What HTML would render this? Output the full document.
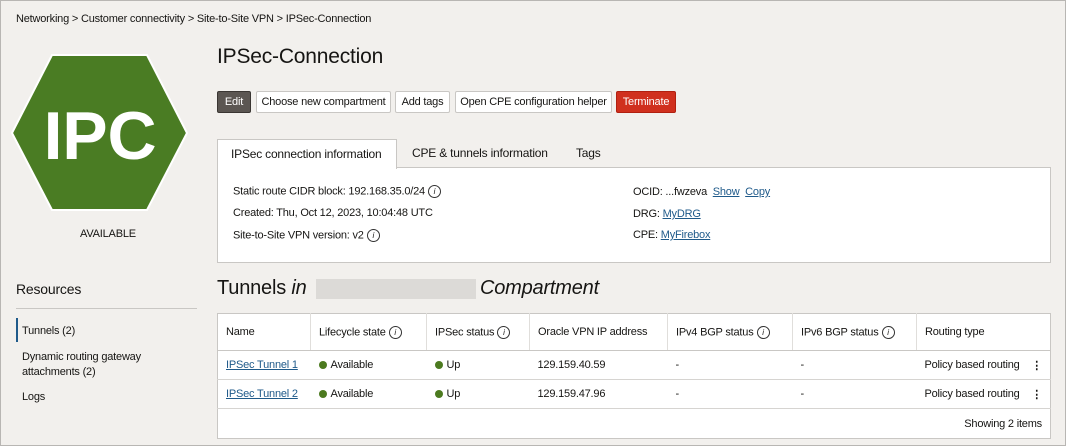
<!DOCTYPE html><html><head><style>
body{margin:0;width:1066px;height:446px;overflow:hidden;background:#f2f0ed;font-family:"Liberation Sans",sans-serif;font-size:11px;color:#161513;letter-spacing:-0.2px}
.frame{position:absolute;left:0;top:0;width:1064px;height:444px;border:1px solid #b8b6b3}
.a{position:absolute;white-space:nowrap}
.btn{position:absolute;top:91px;height:20px;line-height:20px;border:1px solid #c9c7c4;background:#fff;text-align:center;border-radius:2px;font-size:11px}
a{color:#1f5a8a;text-decoration:underline}
.i{display:inline-block;width:11px;height:11px;border:1px solid #333;border-radius:50%;font-size:8px;line-height:11px;text-align:center;font-style:italic;vertical-align:middle;margin-left:3px}
.dot{display:inline-block;width:8px;height:8px;border-radius:50%;background:#4c7a1f;margin-right:4px;vertical-align:-1px}
table{position:absolute;left:217px;top:313px;width:834px;border-collapse:collapse;background:#fff;border:1px solid #c9c7c4}
td{border-bottom:1px solid #d6d4d1;padding:0 8px;height:28px}
th{font-weight:normal;text-align:left;padding:0 8px;height:36px;border-right:1px solid #e0dedb;border-bottom:1px solid #c9c7c4}
</style></head><body><div class="frame"></div>
<div class="a" style="left:16px;top:13px">Networking &gt; Customer connectivity &gt; Site-to-Site VPN &gt; IPSec-Connection</div>
<svg class="a" style="left:10px;top:53px" width="180" height="160"><polygon points="2,80 42,2 137,2 177,80 137,157 42,157" fill="#4a7c23" stroke="#fff" stroke-width="2"/><text x="90" y="106" text-anchor="middle" font-family="Liberation Sans" font-weight="bold" font-size="68" fill="#fff">IPC</text></svg>
<div class="a" style="left:80px;top:228px">AVAILABLE</div>
<div class="a" style="left:217px;top:45px;font-size:21px">IPSec-Connection</div>
<div class="btn" style="left:217px;width:32px;background:#5b5652;color:#fff;border-color:#3a3633">Edit</div>
<div class="btn" style="left:256px;width:133px">Choose new compartment</div>
<div class="btn" style="left:395px;width:53px">Add tags</div>
<div class="btn" style="left:455px;width:155px">Open CPE configuration helper</div>
<div class="btn" style="left:616px;width:58px;background:#d0301e;color:#fff;border-color:#b02010">Terminate</div>
<div class="a" style="left:217px;top:139px;width:178px;height:29px;background:#fff;border:1px solid #c9c7c4;border-bottom:none;z-index:2"></div>
<div class="a" style="left:231px;top:147px;font-size:12px;z-index:3">IPSec connection information</div>
<div class="a" style="left:412px;top:146px;font-size:12px">CPE &amp; tunnels information</div>
<div class="a" style="left:576px;top:146px;font-size:12px">Tags</div>
<div class="a" style="left:217px;top:167px;width:832px;height:94px;background:#fff;border:1px solid #c9c7c4"></div>
<div class="a" style="left:233px;top:185px">Static route CIDR block: 192.168.35.0/24<span class="i">i</span></div>
<div class="a" style="left:233px;top:207px">Created: Thu, Oct 12, 2023, 10:04:48 UTC</div>
<div class="a" style="left:233px;top:229px">Site-to-Site VPN version: v2<span class="i">i</span></div>
<div class="a" style="left:633px;top:186px">OCID: ...fwzeva &nbsp;<a>Show</a> &nbsp;<a>Copy</a></div>
<div class="a" style="left:633px;top:208px">DRG: <a>MyDRG</a></div>
<div class="a" style="left:633px;top:229px">CPE: <a>MyFirebox</a></div>
<div class="a" style="left:16px;top:281px;font-size:14px">Resources</div>
<div class="a" style="left:16px;top:308px;width:181px;border-top:1px solid #c9c7c4"></div>
<div class="a" style="left:16px;top:318px;width:2px;height:24px;background:#1f5a8a"></div>
<div class="a" style="left:22px;top:325px">Tunnels (2)</div>
<div class="a" style="left:22px;top:350px;line-height:15px">Dynamic routing gateway<br>attachments (2)</div>
<div class="a" style="left:22px;top:391px">Logs</div>
<div class="a" style="left:217px;top:277px;font-size:20px">Tunnels <i>in</i></div>
<div class="a" style="left:316px;top:279px;width:160px;height:20px;background:#dcdad7"></div>
<div class="a" style="left:480px;top:277px;font-size:20px"><i>Compartment</i></div>
<table>
<tr><th style="width:76px">Name</th><th style="width:99px">Lifecycle state<span class="i">i</span></th><th style="width:86px">IPSec status<span class="i">i</span></th><th style="width:121px">Oracle VPN IP address</th><th style="width:108px">IPv4 BGP status<span class="i">i</span></th><th style="width:107px">IPv6 BGP status<span class="i">i</span></th><th style="border-right:none">Routing type</th></tr>
<tr><td><a>IPSec Tunnel 1</a></td><td><span class="dot"></span>Available</td><td><span class="dot"></span>Up</td><td>129.159.40.59</td><td>-</td><td>-</td><td>Policy based routing<span style="float:right;font-weight:bold">⋮</span></td></tr>
<tr><td><a>IPSec Tunnel 2</a></td><td><span class="dot"></span>Available</td><td><span class="dot"></span>Up</td><td>129.159.47.96</td><td>-</td><td>-</td><td>Policy based routing<span style="float:right;font-weight:bold">⋮</span></td></tr>
<tr><td colspan="7" style="text-align:right;border:none;height:29px">Showing 2 items</td></tr>
</table>
</body></html>
